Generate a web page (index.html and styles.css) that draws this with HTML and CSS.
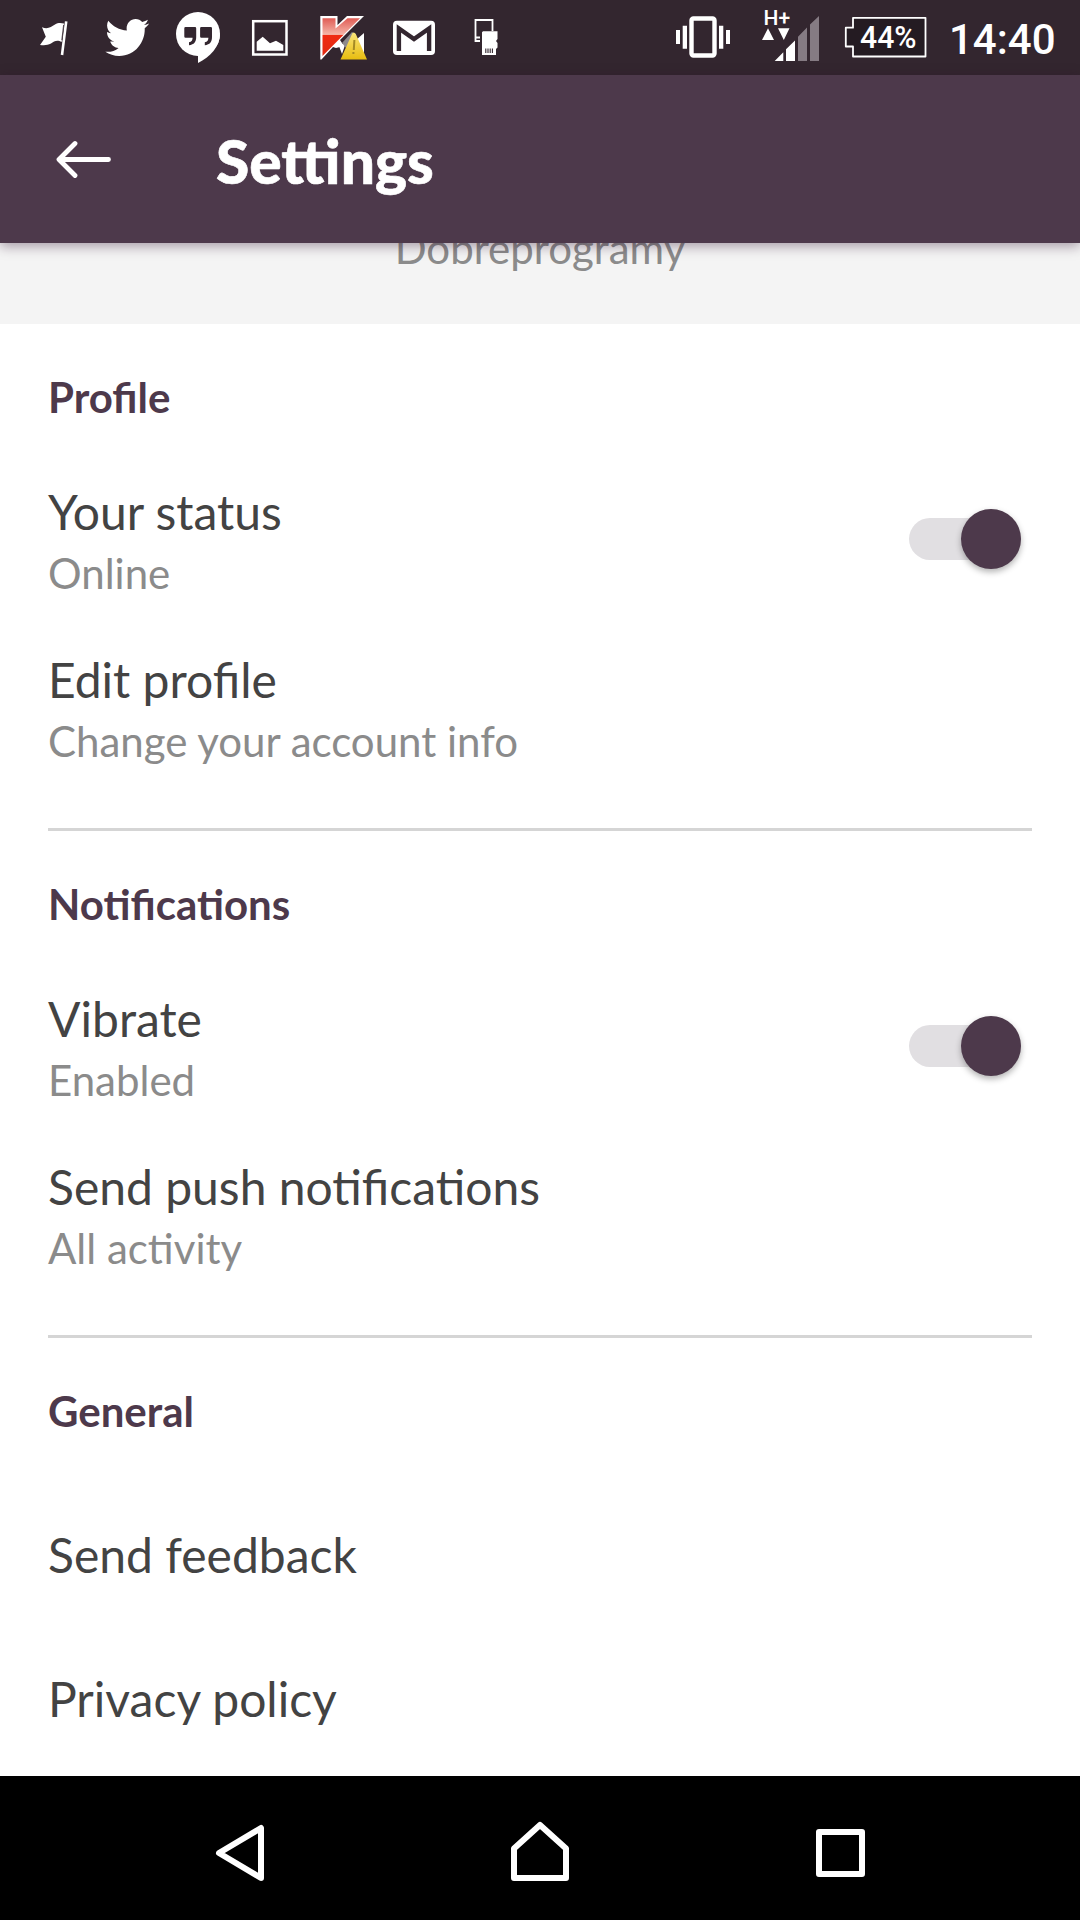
FILE: index.html
```html
<!DOCTYPE html>
<html lang="en">
<head>
<meta charset="utf-8">
<title>Settings</title>
<link rel="stylesheet" href="styles.css">
</head>
<body>
<div class="screen">
  <div class="status-bar">
    <div class="status-left">
      <svg class="slot" viewBox="0 0 72 75"><path d="M24 27.3C30 29.5 33 27 37 24.5C40 22.6 43 22.8 46 23.6L43.6 42C39 39.5 36 41.5 33 43.5C29.500 45.500 26 45.300 22 45L27.800 36.700Z" fill="#fff"/><path d="M48.200 21.300L44 55" stroke="#fff" stroke-width="2.600"/><path d="M45.600 25L43.800 40" stroke="#33262f" stroke-width=".8"/></svg>
      <svg class="slot" viewBox="0 0 72 75"><path transform="translate(15.300 14.800) scale(1.830 1.890)" fill="#fff" d="M23.954 4.569c-.885.389-1.830.654-2.825.775 1.014-.611 1.794-1.574 2.163-2.723-.951.555-2.005.959-3.127 1.184-.896-.959-2.173-1.559-3.591-1.559-2.717 0-4.920 2.203-4.920 4.917 0 .390.045.765.127 1.124C7.691 8.094 4.066 6.130 1.640 3.161c-.427.722-.666 1.561-.666 2.475 0 1.710.870 3.213 2.188 4.096-.807-.026-1.566-.248-2.228-.616v.061c0 2.385 1.693 4.374 3.946 4.827-.413.111-.849.171-1.296.171-.314 0-.615-.030-.916-.086.631 1.953 2.445 3.377 4.604 3.417-1.680 1.319-3.809 2.105-6.102 2.105-.390 0-.779-.023-1.170-.067 2.189 1.394 4.768 2.209 7.557 2.209 9.054 0 13.999-7.496 13.999-13.986 0-.209 0-.420-.015-.630.961-.689 1.800-1.560 2.460-2.548z"/></svg>
      <svg class="slot" viewBox="0 0 72 75"><circle cx="36" cy="34" r="22" fill="#fff"/><path d="M36 52V63C48 57 58 46.500 58 34Z" fill="#fff"/><path d="M23.500 27H33q1.200 0 1.200 1.200V37c0 5-2 7.500-7.200 8.300v-3c2.700-.7 3.600-2.300 3.600-4.600h-7.100q-1.200 0-1.200-1.200v-8.300q0-1.200 1.200-1.200ZM39.300 27h9.500q1.200 0 1.200 1.200V37c0 5-2 7.500-7.200 8.300v-3c2.700-.7 3.600-2.300 3.600-4.600h-7.100q-1.200 0-1.200-1.200v-8.300q0-1.200 1.200-1.200Z" fill="#33262f"/></svg>
      <svg class="slot" viewBox="0 0 72 75"><rect x="19.200" y="21.200" width="33.300" height="33.300" fill="none" stroke="#fff" stroke-width="2.500"/><path d="M22.700 50.700V41.700L28.700 36.700L36 43.300L42 40.700L49.300 45V50.700Z" fill="#fff"/></svg>
      <svg class="slot" viewBox="0 0 72 75">
        <defs>
          <linearGradient id="red" x1="0" y1="0" x2="0" y2="1"><stop offset="0" stop-color="#e05c55"/><stop offset=".43" stop-color="#f5b5a8"/><stop offset=".45" stop-color="#f02a12"/><stop offset="1" stop-color="#e02a12"/></linearGradient>
          <linearGradient id="yellow" x1="0" y1="0" x2="0" y2="1"><stop offset="0" stop-color="#fae47a"/><stop offset="1" stop-color="#e8bd10"/></linearGradient>
        </defs>
        <path d="M14.300 16H31.500V25L41 16H58L34 40L38 46L30 48L27 47L15.500 59.500H14.300Z" fill="#fff"/>
        <path d="M58 33L50 40L58 54ZM33 46L40 42L36 54Z" fill="#fff"/>
        <path d="M36 43L46 32L49 34L40 48Z" fill="#8d898b"/>
        <path d="M16.500 18.200H29.500V28.500L41.500 18.200H54L16.500 56Z" fill="url(#red)"/>
        <path d="M47.700 32.500Q49 32.500 49.800 34L61 59.500H34.500L46 34Q46.500 32.500 47.700 32.500Z" fill="url(#yellow)"/>
        <path d="M48.400 40L47.800 50M47.400 52V54" stroke="#a58a25" stroke-width="2"/>
      </svg>
      <svg class="slot" viewBox="0 0 72 75"><rect x="15" y="20.800" width="42" height="34.200" rx="4" fill="#fff"/><path d="M20.900 51V28.500L36 39L51.100 28.500V51" fill="none" stroke="#33262f" stroke-width="4.400"/></svg>
      <svg class="slot" viewBox="0 0 72 75"><path d="M30 41H25.500V20H42.500V31M25.500 37.500H30" fill="none" stroke="#fff" stroke-width="1.800"/><path d="M33 31.300H47.500V39L46 41L47.500 43V47.500L46 49V55H32V32.300Z" fill="#fff"/><path d="M35.800 48.500v4.500M38 48.500v4.500M40.200 48.500v4.500M42.400 48.500v4.500" stroke="#33262f" stroke-width="1.100"/></svg>
    </div>
    <div class="status-right">
      <svg class="slot" viewBox="0 0 72 75"><rect x="31.500" y="18.500" width="23" height="37" rx="2" fill="none" stroke="#fff" stroke-width="4.400"/><path d="M16 30h4v14h-4zM22.700 25.700H27V48.700H22.700zM59 25.700h4.300v23H59zM66 30h4v14h-4z" fill="#fff"/></svg>
      <svg class="slot" viewBox="0 0 72 75"><text class="network" x="13.500" y="25">H+</text><path d="M18 28.300L24 40H12ZM28 28.300H39.500L33.800 40ZM24.700 61L33.300 52.300V61ZM36 61V49.300L45 40.500V61Z" fill="#fff"/><path d="M48 61V36.700L57 27.500V61ZM60 61V24.500L69 16V61Z" fill="#857b83"/></svg>
      <svg class="battery" viewBox="0 0 90 75"><path d="M13 17.800H85.500V56.500H13V46.500H5.800V27.700H13Z" fill="#241b22" stroke="#fff" stroke-width="1.800" stroke-linejoin="round"/><text class="percent" x="20" y="47.800" textLength="56.500" lengthAdjust="spacingAndGlyphs">44%</text></svg>
      <span class="clock">14:40</span>
    </div>
  </div>

  <header class="app-bar">
    <svg class="back" viewBox="0 0 56 40"><path d="M52.500 20.500H3.500M19 4.500L3 20.500L19 36.500" fill="none" stroke="#fff" stroke-width="4.800" stroke-linecap="round" stroke-linejoin="round"/></svg>
    <h1 class="title">Settings</h1>
  </header>

  <main class="content">
    <div class="team">Dobreprogramy</div>
    <section class="group">
      <h2 class="heading">Profile</h2>
      <div class="row">
        <div class="labels"><div class="name">Your status</div><div class="value">Online</div></div>
        <div class="switch"><div class="thumb"></div></div>
      </div>
      <div class="row">
        <div class="labels"><div class="name">Edit profile</div><div class="value">Change your account info</div></div>
      </div>
    </section>
    <section class="group">
      <h2 class="heading">Notifications</h2>
      <div class="row">
        <div class="labels"><div class="name">Vibrate</div><div class="value">Enabled</div></div>
        <div class="switch"><div class="thumb"></div></div>
      </div>
      <div class="row">
        <div class="labels"><div class="name">Send push notifications</div><div class="value">All activity</div></div>
      </div>
    </section>
    <section class="group">
      <h2 class="heading">General</h2>
      <div class="links">
        <div class="link name">Send feedback</div>
        <div class="link name">Privacy policy</div>
      </div>
    </section>
  </main>

  <nav class="nav-bar">
    <svg class="key" viewBox="0 0 72 72"><path d="M56 16V66L14 41Z" transform="translate(1 0)"/></svg>
    <svg class="key" viewBox="0 0 72 72"><path d="M36 13L62 36.500V66H10V36.500Z"/></svg>
    <svg class="key" viewBox="0 0 72 72"><rect x="15" y="20" width="43" height="42"/></svg>
  </nav>
</div>
</body>
</html>
```

FILE: styles.css
```css
* { box-sizing: border-box; margin: 0; }
body { background: #fff; font-family: Lato, sans-serif; }
.screen { width: 1080px; height: 1920px; display: flex; flex-direction: column; overflow: hidden; }

.status-bar { flex: none; height: 75px; background: #33262f; display: flex; justify-content: space-between; padding: 0 24px 0 18px; color: #fff; }
.status-left { display: flex; }
.status-right { display: flex; gap: 18px; }
.slot { width: 72px; height: 75px; }
.battery { width: 90px; height: 75px; }
.network, .percent, .clock { font-family: Roboto, sans-serif; font-weight: 500; fill: #fff; }
.network { font-size: 21px; }
.percent { font-size: 30.5px; }
.clock { width: 108px; font-size: 42px; line-height: 79px; padding-left: 1px; white-space: nowrap; }

.app-bar { flex: none; height: 168px; background: #4d394b; display: flex; align-items: center; gap: 104px; padding: 0 56px; position: relative; z-index: 1; box-shadow: 0 3px 12px rgba(40, 10, 40, .4); }
.back { width: 56px; height: 40px; }
.title { color: #fff; font-size: 60.5px; line-height: 72px; font-weight: 900; padding-top: 3px; -webkit-text-stroke: .6px #fff; }

.content { flex: 1; min-height: 0; overflow: hidden; }
.team { height: 81px; background: #f4f4f4; color: #8b8b8b; font-size: 42px; line-height: 50px; display: flex; justify-content: center; align-items: flex-end; padding-bottom: 51px; }
.group { margin: 0 48px; padding: 48px 0 36px; border-bottom: 3px solid #d5d5d5; }
.group:last-child { border-bottom: 0; }
.heading { color: #4d394b; font-size: 42px; line-height: 50px; font-weight: 700; margin-bottom: 34px; }
.row { height: 168px; display: flex; align-items: center; justify-content: space-between; padding-right: 11px; }
.labels { display: flex; flex-direction: column; gap: 7px; padding-top: 1px; }
.name { color: #434343; font-size: 48px; line-height: 58px; }
.value { color: #8b8b8b; font-size: 42px; line-height: 50px; }
.switch { width: 112px; height: 42px; border-radius: 21px; background: #e1dfe2; display: flex; align-items: center; justify-content: flex-end; margin-bottom: 2px; }
.thumb { width: 60px; height: 60px; border-radius: 50%; background: #4d394b; box-shadow: 0 3px 6px rgba(0, 0, 0, .3); flex: none; }
.links { padding-top: 13px; }
.link { padding: 43px 0; }

.nav-bar { flex: none; height: 144px; background: #000; display: flex; justify-content: center; gap: 228px; padding-top: 36px; }
.key { width: 72px; height: 72px; fill: none; stroke: #fff; stroke-width: 6; stroke-linejoin: round; }
```
